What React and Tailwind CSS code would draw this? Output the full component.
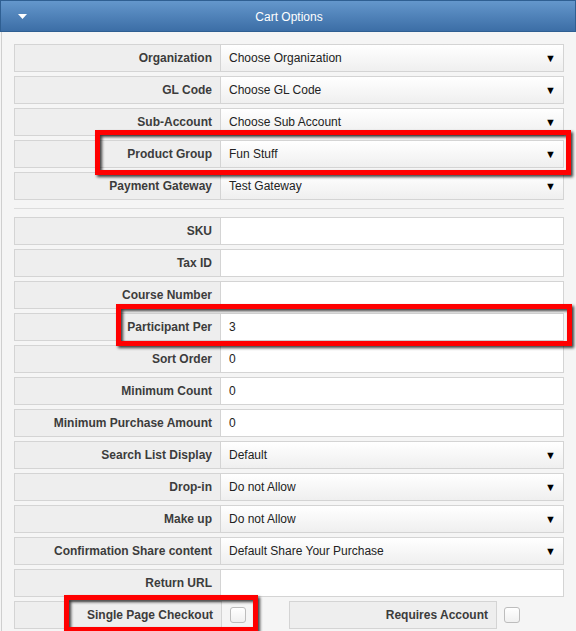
import React from 'react';

const selectRows = [
    { label: 'Organization', value: 'Choose Organization' },
    { label: 'GL Code', value: 'Choose GL Code' },
    { label: 'Sub-Account', value: 'Choose Sub Account' },
    { label: 'Product Group', value: 'Fun Stuff' },
    { label: 'Payment Gateway', value: 'Test Gateway' },
];

const detailRows = [
    { label: 'SKU', value: '' },
    { label: 'Tax ID', value: '' },
    { label: 'Course Number', value: '' },
    { label: 'Participant Per', value: '3' },
    { label: 'Sort Order', value: '0' },
    { label: 'Minimum Count', value: '0' },
    { label: 'Minimum Purchase Amount', value: '0' },
    { label: 'Search List Display', value: 'Default', select: true },
    { label: 'Drop-in', value: 'Do not Allow', select: true },
    { label: 'Make up', value: 'Do not Allow', select: true },
    { label: 'Confirmation Share content', value: 'Default Share Your Purchase', select: true },
    { label: 'Return URL', value: '' },
];

function Row({ label, value, select }) {
    return (
        <div className="flex h-[28px] border border-[#d4d4d4]">
            <div className="w-[206px] shrink-0 bg-[#eeeeee] border-r border-[#d4d4d4] flex items-center justify-end pr-[8px] font-bold text-[#3c3c3c]">
                {label}
            </div>
            {select ? (
                <div className="flex-1 flex items-center justify-between pl-[8px] pr-[7px] bg-gradient-to-b from-white to-[#efefef] text-[#222]">
                    <span>{value}</span>
                    <span className="text-[11px] text-black">▼</span>
                </div>
            ) : (
                <div className="flex-1 flex items-center pl-[8px] bg-white text-[#222]">{value}</div>
            )}
        </div>
    );
}

function Checkbox() {
    return <div className="w-[16px] h-[16px] rounded-[3px] border border-[#bdbdbd] bg-gradient-to-b from-white to-[#f0f0f0]" />;
}

function Callout({ className }) {
    return (
        <div className={`absolute border-[5px] border-[#ff0000] drop-shadow-[2px_2px_1.5px_rgba(0,0,0,0.75)] ${className}`} />
    );
}

export default function App() {
    return (
        <div className="relative w-[576px] h-[631px] overflow-hidden bg-[#f5f5f5] font-['Liberation_Sans',Arial,sans-serif] text-[12px]">
            <div className="h-[32px] flex items-center relative border border-[#2f5f92] bg-gradient-to-b from-[#6497cc] to-[#3c6ea6] text-white">
                <svg className="absolute left-[17px] top-[13px]" width="9" height="6" viewBox="0 0 9 6">
                    <path d="M0 0 H9 L4.5 5 Z" fill="white" />
                </svg>
                <div className="flex-1 text-center pl-[2px] pt-px">Cart Options</div>
            </div>

            <div className="ml-px border-l border-[#cfcfcf] pl-[12px] pr-[12px] pt-[12px] h-full">
                <div className="flex flex-col gap-[4px]">
                    {selectRows.map((r) => (
                        <Row key={r.label} label={r.label} value={r.value} select />
                    ))}
                </div>

                <div className="my-[8px] h-px bg-[#dcdcdc]" />

                <div className="flex flex-col gap-[4px]">
                    {detailRows.map((r) => (
                        <Row key={r.label} {...r} />
                    ))}

                    <div className="flex items-center h-[28px]">
                        <div className="w-[208px] h-full shrink-0 bg-[#eeeeee] border border-[#d4d4d4] flex items-center justify-end pr-[8px] font-bold text-[#3c3c3c]">
                            Single Page Checkout
                        </div>
                        <div className="ml-[8px]">
                            <Checkbox />
                        </div>
                        <div className="ml-[43px] w-[208px] h-full shrink-0 bg-[#eeeeee] border border-[#d4d4d4] flex items-center justify-end pr-[8px] font-bold text-[#3c3c3c]">
                            Requires Account
                        </div>
                        <div className="ml-[7px]">
                            <Checkbox />
                        </div>
                    </div>
                </div>
            </div>

            <Callout className="left-[95px] top-[130px] w-[476px] h-[45px]" />
            <Callout className="left-[116px] top-[304px] w-[456px] h-[42px]" />
            <Callout className="left-[64px] top-[595px] w-[194px] h-[37px]" />
        </div>
    );
}
